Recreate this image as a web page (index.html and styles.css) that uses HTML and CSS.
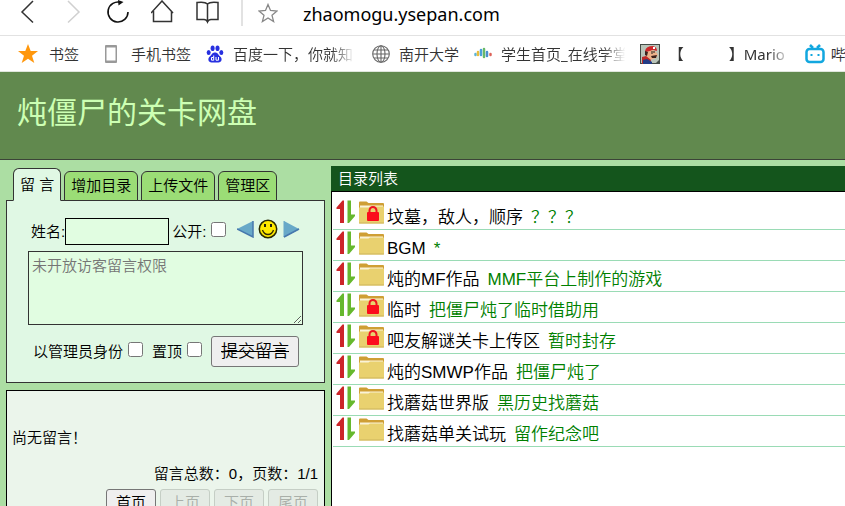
FILE: index.html
```html
<!DOCTYPE html>
<html lang="zh-CN">
<head>
<meta charset="utf-8">
<title>炖僵尸的关卡网盘</title>
<link rel="stylesheet" href="styles.css">
</head>
<body>
<svg class="defs" aria-hidden="true">
  <symbol id="up" viewBox="0 0 10 24"><path d="M6.500 0.5H8V23H4V9H0.500V7.500Z"/></symbol>
  <symbol id="down" viewBox="0 0 10 24"><path d="M1.500 0.5H5V14.500H9V16L3 23H1.500Z"/></symbol>
  <symbol id="folder" viewBox="0 0 25 23">
    <path d="M0 21V1.500Q0 0.500 1 0.500H7.500L9.500 2H24Q25 2 25 3V21Z" fill="#cf9f35"/>
    <path d="M1 4.500H24V9H1Z" fill="#faf3d8"/>
    <path d="M0 6.500H9.500L11 5.500H25V21.500Q25 22.500 24 22.500H1Q0 22.500 0 21.500Z" fill="#e9d16f"/>
    <path d="M0 22H25" stroke="#cdb45c"/>
  </symbol>
  <symbol id="lock" viewBox="0 0 25 23">
    <path d="M10.500 12V9.500a3.500 3.500 0 0 1 7 0V12" fill="none" stroke="#ef1420" stroke-width="2"/>
    <rect x="8" y="11" width="12" height="9" rx="1" fill="#fb0c1c"/>
  </symbol>
</svg>

<nav class="toolbar" aria-label="浏览器工具栏">
  <button class="tool" aria-label="后退"><svg viewBox="0 0 24 24" width="24" height="24"><path d="M17 1L6 12L17 22.500" fill="none" stroke="#333" stroke-width="1.500"/></svg></button>
  <button class="tool" aria-label="前进"><svg viewBox="0 0 24 24" width="24" height="24"><path d="M7 1L18 12L7 22.500" fill="none" stroke="#d0d0d0" stroke-width="1.500"/></svg></button>
  <button class="tool" aria-label="刷新"><svg viewBox="0 0 24 24" width="24" height="24"><path d="M22 12A10 10 0 1 1 15 2.500" fill="none" stroke="#111" stroke-width="1.600"/><path d="M12 0L17.500 2L12.500 5.500Z" fill="#111"/></svg></button>
  <button class="tool" aria-label="主页"><svg viewBox="0 0 24 24" width="24" height="24"><path d="M0 13L11 1L22 13M2.500 11V21.500H20.500V11" fill="none" stroke="#333" stroke-width="1.500"/></svg></button>
  <button class="tool" aria-label="阅读"><svg viewBox="0 0 24 24" width="24" height="24"><path d="M11.500 4Q9 1.500 1 2.500V19.500H8Q10.500 19.500 11.500 22Q12.500 19.500 15 19.500H22V2.500Q14 1.500 11.500 4V21" fill="none" stroke="#333" stroke-width="1.500"/></svg></button>
  <span class="tool-divider"></span>
  <button class="favorite" aria-label="收藏"><svg viewBox="0 0 20 20" width="20" height="20"><path d="M10 1.500L12.500 7.500L19 8L14 12.300L15.600 18.500L10 15L4.400 18.500L6 12.300L1 8L7.500 7.500Z" fill="none" stroke="#888" stroke-width="1.300"/></svg></button>
  <span class="address">zhaomogu.ysepan.com</span>
</nav>

<nav class="bookmarks" aria-label="书签栏">
  <a class="bookmark starred" href="#"><svg viewBox="0 0 20 20" width="20" height="20"><path d="M10 0L12.700 7H20L14 11.700L16.300 19L10 14.700L3.700 19L6 11.700L0 7H7.300Z" fill="#ff970c"/></svg><span>书签</span></a>
  <span class="mark-divider"></span>
  <a class="bookmark phone" href="#"><svg viewBox="0 0 14 20" width="14" height="20"><rect x="1" y="1" width="12" height="18" rx="1" fill="#999"/><path d="M2.500 3.500H11.500V16.500H2.500Z" fill="#fff"/></svg><span>手机书签</span></a>
  <a class="bookmark baidu" href="#"><svg viewBox="0 0 18 18" width="18" height="18"><g fill="#2730e0"><ellipse cx="2.700" cy="7.500" rx="2" ry="2.600"/><ellipse cx="6.600" cy="3.200" rx="2" ry="2.800"/><ellipse cx="11.500" cy="3.200" rx="2" ry="2.800"/><ellipse cx="15.300" cy="7.500" rx="2" ry="2.600"/><path d="M9 7.500C12 7.500 12.300 10 14 11.300C17 13.800 15.500 17.500 12.500 17.500H5.500C2.500 17.500 1 13.800 4 11.300C5.700 10 6 7.500 9 7.500Z"/></g><path d="M7.700 10.500V15.500M7.500 12.500H5.500V15.200H7.500M10 12V15.200H12.500V12" fill="none" stroke="#fff"/></svg><span class="fade">百度一下，你就知</span></a>
  <a class="bookmark globe" href="#"><svg viewBox="0 0 18 18" width="18" height="18"><g fill="none" stroke="#666" stroke-width="1.100"><circle cx="9" cy="9" r="8.300"/><ellipse cx="9" cy="9" rx="4" ry="8.300"/><path d="M9 1V17M2 5H16M1 9H17M2 13H16"/></g></svg><span>南开大学</span></a>
  <a class="bookmark school" href="#"><svg viewBox="0 0 18 14" width="18" height="14"><g fill="none" stroke-width="2.500" stroke-linecap="round"><path d="M1.500 7V8" stroke="#5ab4d8"/><path d="M4 5V8" stroke="#e9bd3c"/><path d="M7 3V8" stroke="#4aa0da"/><path d="M10 2V10" stroke="#69b96a"/><path d="M13 5V9" stroke="#4a8fcf"/><path d="M16.500 7V8" stroke="#dd6258"/></g></svg><span class="fade">学生首页_在线学堂</span></a>
  <a class="bookmark mario" href="#"><svg viewBox="0 0 20 20" width="20" height="20"><path d="M0 0H20V20H0Z" fill="#444b46"/><path d="M1 1H19V16L16 19H1Z" fill="#bac4b9"/><path d="M5 7Q6 2 13 2Q17 3 17 7L13 6L6 9Z" fill="#cf282b"/><path d="M6 8L13 6L16 8L18 11L16 14L10 16L6 13Z" fill="#edb18a"/><path d="M5 7L8 8L7 12L5 11ZM11 12L17 11L16 14L12 14Z" fill="#3c211b"/><path d="M12 7V10M14 7V9" stroke="#222"/><path d="M2 13L6 12L11 16L10 20H2Z" fill="#bd2927"/><path d="M3 16L7 15L12 18V20H3Z" fill="#233c86"/><path d="M13 3L15 3L15 5L13 5Z" fill="#fff"/></svg><span class="fade">【　　　】Mario</span></a>
  <a class="bookmark bili" href="#"><svg viewBox="0 0 20 20" width="20" height="20"><g fill="none" stroke="#12a7df" stroke-width="2.500"><rect x="1.500" y="5" width="17" height="13" rx="3"/><path d="M5 1L8 4M15 1L12 4"/></g><path d="M6.500 10V12M13.500 10V12" stroke="#12a7df" stroke-width="2"/></svg><span>哔</span></a>
</nav>

<header class="banner"><h1>炖僵尸的关卡网盘</h1></header>

<main class="page">
  <aside class="side">
    <div class="tabs" role="tablist">
      <button class="tab active" role="tab" aria-selected="true">留 言</button>
      <button class="tab" role="tab">增加目录</button>
      <button class="tab" role="tab">上传文件</button>
      <button class="tab" role="tab">管理区</button>
    </div>
    <form class="panel">
      <div class="line who">
        <label for="name">姓名:</label><input class="name" id="name" type="text">
        <label class="public" for="public">公开:</label><input class="check" id="public" type="checkbox">
        <button class="face-button" type="button" aria-label="上一个表情"><svg viewBox="0 0 17 18" width="17" height="18"><path d="M0 9L16 1V17Z" fill="#68a9c8"/><path d="M0 9L16 17V1" fill="none" stroke="#4778ad" stroke-width="1.500"/></svg></button>
        <svg class="smile" viewBox="0 0 20 20" width="20" height="20"><circle cx="10" cy="10" r="8.700" fill="#ffea00" stroke="#292900" stroke-width="1.500"/><path d="M7 5V8M13 5V8" stroke="#221" stroke-width="2"/><path d="M4.500 11Q6 15.500 10 15.500T15.500 11" fill="none" stroke="#332b00" stroke-width="1.300"/></svg>
        <button class="face-button" type="button" aria-label="下一个表情"><svg viewBox="0 0 17 18" width="17" height="18"><path d="M1 1L16 9L1 17Z" fill="#68a9c8"/><path d="M1 1V17L16 9" fill="none" stroke="#68a9c8"/><path d="M1 17L16 9" stroke="#4778ad" stroke-width="1.500"/></svg></button>
      </div>
      <textarea class="message" aria-label="留言" placeholder="未开放访客留言权限"></textarea>
      <div class="line send">
        <label for="admin">以管理员身份</label><input class="check" id="admin" type="checkbox">
        <label for="top">置顶</label><input class="check" id="top" type="checkbox">
        <button class="submit" type="button">提交留言</button>
      </div>
    </form>
    <section class="messages">
      <p class="empty">尚无留言！</p>
      <p class="total">留言总数：0，页数：1/1</p>
      <div class="pager">
        <button>首页</button><button disabled>上页</button><button disabled>下页</button><button disabled>尾页</button>
      </div>
    </section>
  </aside>

  <section class="directory">
    <h2>目录列表</h2>
    <ul>
      <li><svg class="arrow red"><use href="#up"/></svg><svg class="arrow green"><use href="#down"/></svg><svg class="folder"><use href="#folder"/><use href="#lock"/></svg><a href="#">坟墓，敌人，顺序</a><span class="note">？？？</span></li>
      <li><svg class="arrow red"><use href="#up"/></svg><svg class="arrow green"><use href="#down"/></svg><svg class="folder"><use href="#folder"/></svg><a href="#">BGM</a><span class="note">*</span></li>
      <li><svg class="arrow red"><use href="#up"/></svg><svg class="arrow green"><use href="#down"/></svg><svg class="folder"><use href="#folder"/></svg><a href="#">炖的MF作品</a><span class="note">MMF平台上制作的游戏</span></li>
      <li><svg class="arrow green"><use href="#up"/></svg><svg class="arrow green"><use href="#down"/></svg><svg class="folder"><use href="#folder"/><use href="#lock"/></svg><a href="#">临时</a><span class="note">把僵尸炖了临时借助用</span></li>
      <li><svg class="arrow red"><use href="#up"/></svg><svg class="arrow green"><use href="#down"/></svg><svg class="folder"><use href="#folder"/><use href="#lock"/></svg><a href="#">吧友解谜关卡上传区</a><span class="note">暂时封存</span></li>
      <li><svg class="arrow red"><use href="#up"/></svg><svg class="arrow green"><use href="#down"/></svg><svg class="folder"><use href="#folder"/></svg><a href="#">炖的SMWP作品</a><span class="note">把僵尸炖了</span></li>
      <li><svg class="arrow red"><use href="#up"/></svg><svg class="arrow green"><use href="#down"/></svg><svg class="folder"><use href="#folder"/></svg><a href="#">找蘑菇世界版</a><span class="note">黑历史找蘑菇</span></li>
      <li><svg class="arrow red"><use href="#up"/></svg><svg class="arrow green"><use href="#down"/></svg><svg class="folder"><use href="#folder"/></svg><a href="#">找蘑菇单关试玩</a><span class="note">留作纪念吧</span></li>
    </ul>
  </section>
</main>
</body>
</html>
```
FILE: styles.css
```css
* { box-sizing: border-box; }
html, body { height: 100%; }
body {
  margin: 0;
  display: flex;
  flex-direction: column;
  overflow: hidden;
  background: #acdea3;
  color: #000;
  font: 400 15px/20px "Liberation Sans", "Noto Sans CJK SC DemiLight", "Noto Sans CJK SC", sans-serif;
}
button, input, textarea { font: inherit; }
svg { display: block; flex: none; }
a { color: inherit; text-decoration: none; }
h1, h2, p, ul { margin: 0; padding: 0; font-weight: inherit; }
.defs { position: absolute; width: 0; height: 0; }

.toolbar {
  display: flex;
  flex: none;
  gap: 21px;
  height: 36px;
  padding: 0 0 0 16px;
  background: #fff;
  border-bottom: 1px solid #e2e2e2;
}
.tool, .favorite, .face-button { padding: 0; border: 0; background: none; }
.tool { height: 24px; }
.tool-divider { width: 2px; height: 26px; background: #e2e2e2; }
.favorite { height: 24px; margin: 1px 0 0 -6px; }
.address {
  margin-left: 4px;
  color: #000;
  font: 18px/28px "Noto Sans", sans-serif;
}

.bookmarks {
  display: flex;
  flex: none;
  align-items: center;
  height: 36px;
  padding-left: 18px;
  overflow: hidden;
  background: #fff;
  border-bottom: 1px solid #dfe6dc;
  color: #333;
  font-family: "Noto Sans", "Noto Sans CJK SC DemiLight", "Noto Sans CJK SC", sans-serif;
}
.bookmark {
  display: flex;
  flex: none;
  align-items: center;
  gap: 9px;
  margin-right: 15px;
  white-space: nowrap;
}
.fade {
  min-width: 124px;
  mask-image: linear-gradient(to right, #000 80%, transparent 98%);
}
.starred { gap: 11px; margin-right: 10px; }
.mark-divider { width: 2px; height: 20px; margin-right: 15px; background: #e2e2e2; }
.phone { gap: 13px; }
.school { margin-right: 12px; }
.mario { margin-right: 12px; }
.bili { gap: 6px; }

.banner {
  flex: none;
  height: 88px;
  padding: 16px 17px;
  background: #61894e;
  border-bottom: 1px solid #3c4438;
  color: #ccffb3;
}
.banner h1 { font: 400 30px/44px "Noto Sans CJK SC", sans-serif; }

.page {
  display: grid;
  flex: 1;
  grid-template-columns: 331px 1fr;
  min-height: 0;
}
.side { padding: 8px 6px 0; }
.tabs {
  display: flex;
  align-items: flex-end;
  gap: 3px;
  height: 33px;
  padding-left: 7px;
}
.tab {
  position: relative;
  height: 30px;
  padding: 0 6px;
  border: 1px solid #333;
  border-radius: 6px 6px 0 0;
  background: #9bdd76;
  color: #000;
}
.tab.active {
  height: 33px;
  border-bottom-color: #e0f8e4;
  background: #e0f8e4;
}
.panel {
  margin-top: -1px;
  padding: 17px 21px 15px;
  border: 1px solid #333;
  background: #e0f8e4;
}
.line { display: flex; align-items: center; }
.who { height: 27px; padding-left: 3px; }
.name {
  width: 104px;
  height: 27px;
  border: 1px solid #000;
  background: #e1fde1;
}
.public { margin-left: 3px; }
.check { width: 15px; height: 15px; margin: 0 9px 5px 5px; }
.who .check { margin-right: 11px; }
.face-button + .smile { margin: 0 5px 5px 4px; }
.face-button svg { margin-bottom: 5px; }
.message {
  display: block;
  width: 275px;
  height: 74px;
  margin: 6px 0 11px;
  padding: 4px 3px;
  border: 1px solid #333;
  background: #e1fde1;
}
.message::placeholder { color: #757575; }
.send { height: 31px; padding-left: 5px; }
.submit {
  height: 31px;
  padding: 0 9px;
  border: 1px solid #767676;
  border-radius: 3px;
  background: #efefef;
  color: #000;
  font-size: 17px;
  text-decoration: line-through;
}
.messages {
  margin-top: 7px;
  padding: 37px 6px 6px 5px;
  border: 1px solid #000;
  background: #ebf5eb;
}
.total { margin-top: 16px; text-align: right; }
.pager { display: flex; justify-content: flex-end; gap: 4px; margin-top: 5px; }
.pager button {
  width: 50px;
  height: 28px;
  padding: 0;
  border: 1px solid #767676;
  border-radius: 3px;
  background: #efefef;
  color: #000;
}
.pager button:disabled { border-color: #c5cec5; background: #e4ebe4; color: #a9afa9; }

.directory {
  display: flex;
  flex-direction: column;
  min-width: 0;
  padding-top: 6px;
}
.directory h2 {
  flex: none;
  height: 26px;
  padding-left: 7px;
  border-bottom: 1px solid #000;
  background: #14551c;
  color: #fff;
  font-size: 15px;
  line-height: 25px;
}
.directory ul {
  flex: 1;
  padding: 7px 0 0 1px;
  border-left: 1px solid #000;
  background: #fff;
  list-style: none;
}
.directory li {
  display: flex;
  height: 31px;
  padding: 1px 0 0 3px;
  border-bottom: 1px solid #9adbb5;
  font-size: 17px;
  line-height: 36px;
  white-space: nowrap;
}
.arrow { width: 10px; height: 24px; }
.red { fill: #cc2529; }
.green { fill: #66b82e; }
.folder { width: 25px; height: 23px; margin: 1px 3px 0; }
.note { margin-left: 8px; color: #008000; }
```
